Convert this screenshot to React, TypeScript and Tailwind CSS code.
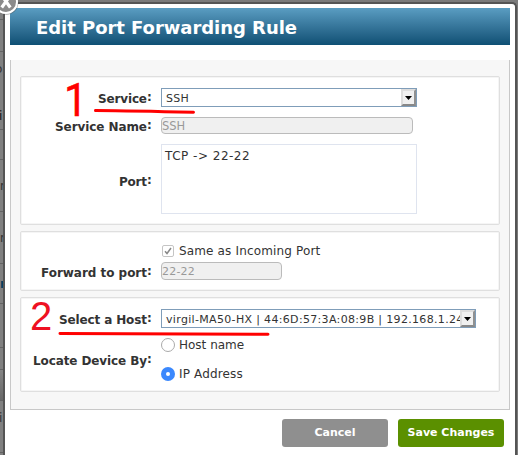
import type { ReactNode } from 'react';

function Label({ children, width, className = '' }: { children: string; width: string; className?: string }) {
  return (
    <div className={`flex w-[131px] shrink-0 justify-end font-bold whitespace-nowrap ${className}`}>
      <svg className={`h-4 ${width}`} overflow="visible" role="img">
        <text x="0" y="13" textLength="100%" lengthAdjust="spacing" fill="#333" fontSize="12">{children}</text>
      </svg>
      <span className="relative -top-px w-[5px] text-[12px] leading-4">:</span>
    </div>
  );
}

function Group({ children, className }: { children: ReactNode; className: string }) {
  return (
    <section className={`rounded-[2px] border border-[#dfdfdf] bg-white shadow-[inset_0_0_0_1px_#f5f5f5] ${className}`}>
      {children}
    </section>
  );
}

function Select({ children, className }: { children: string; className: string }) {
  return (
    <div className={`flex h-[19px] overflow-hidden border border-[#7f9db9] bg-white ${className}`}>
      <div className="min-w-0 flex-1 overflow-hidden pl-1 text-[11px] leading-[19px] tracking-[0.33px] whitespace-nowrap">{children}</div>
      <div className="flex w-[15px] shrink-0 items-center justify-center border-2 border-t-[#ddd] border-r-[#919191] border-b-[#888] border-l-[#ddd] bg-[#f0f0f0]">
        <svg width="7" height="4" viewBox="0 0 7 4"><path d="M0 0h7L3.5 4z" fill="#000" /></svg>
      </div>
    </div>
  );
}

// Rows of the page that stays visible to the left of the dialog
const rows = [
  { t: '', h: 'h-[20px] border-b', c: '' },
  { t: '', h: 'h-[32px] border-b', c: '' },
  { t: 'o', h: 'h-[33px]', c: '-ml-[5px] text-[#333]' },
  { t: 'i', h: 'h-[45px] pt-[17px] border-b', c: '-ml-px text-[#111]' },
  { t: '', h: 'h-[30px] border-b', c: '' },
  { t: 'r', h: 'h-[52px] border-b', c: 'text-[#333]' },
  { t: 'r', h: 'h-[52px] border-b', c: 'text-[#333]' },
  { t: 'r', h: 'h-[40px] border-b', c: 'font-bold text-[#06415f]' },
  { t: '', h: 'h-[44px] border-b', c: '' },
  { t: '', h: 'h-[22px] border-b', c: '' },
  { t: '', h: 'h-[31px] border-b bg-linear-to-b from-[#858585] to-[#686868]', c: '' },
  { t: 'i', h: 'h-[52px] pb-[18px] border-b', c: '-ml-px text-[#333]' },
];

export default function App() {
  return (
    <div className="relative flex h-[455px] w-[518px] overflow-hidden bg-[#7b7b7b] font-['DejaVu_Sans',Verdana,sans-serif] text-[12px] text-[#333]">
      <div className="w-[3px] shrink-0 overflow-hidden bg-[#808080]">
        {rows.map((m, i) => (
          <div key={i} className={`flex items-center border-[#646464] ${m.h}`}>
            <span className={`text-[12px] ${m.c}`}>{m.t}</span>
          </div>
        ))}
      </div>
      <div className="mt-[2px] w-[514px] shrink-0 rounded-tr-[5px] border-t-2 border-r-2 border-l-2 border-[#555] bg-white px-[5px] pt-1">
        <header className="flex h-[37px] items-center bg-linear-to-b from-[#5a9dc2] to-[#0e5074] text-white">
          <svg className="ml-[26px] h-[24px] w-[261px]" overflow="visible">
            <text x="0" y="19" textLength="261" fill="white" fontSize="18" fontWeight="bold">Edit Port Forwarding Rule</text>
          </svg>
        </header>
        <main className="mt-[15px] flex h-[350px] flex-col gap-[6px] border-x border-b border-[#c8c8c8] bg-[#f7f7f7] px-[9px] pt-4">
          <Group className="h-[149px] pt-[11px]">
            <div className="flex items-center">
              <Label width="w-[49px]">Service</Label>
              <Select className="ml-[9px] w-[256px]">SSH</Select>
            </div>
            <div className="mt-[10px] flex h-[17px] items-center">
              <Label width="w-[92px]">Service Name</Label>
              <div className="ml-[9px] h-[17px] w-[252px] rounded-[4px] border border-[#bbb] bg-[#f0f0f0] text-[11.5px] leading-[17px] text-[#999]">SSH</div>
            </div>
            <div className="mt-[10px] flex h-[70px] items-center">
              <Label width="w-[28px]" className="pt-[4px]">Port</Label>
              <div className="ml-[9px] h-[70px] w-[256px] border border-[#dfe4ef] pt-[3px] pl-[3px] leading-4 tracking-[0.5px]">TCP -&gt; 22-22</div>
            </div>
          </Group>
          <Group className="h-[60px] pt-[12px]">
            <div className="ml-[141px] flex h-[14px] items-center gap-[5px]">
              <span className="flex size-3 items-center justify-center rounded-[2px] border border-[#c5c5c5]">
                <svg width="8" height="8" viewBox="0 0 8 8"><path d="M1 4.3 3 6.5 7 1" fill="none" stroke="#888" strokeWidth="1.5" /></svg>
              </span>
              <span className="tracking-[0.15px]">Same as Incoming Port</span>
            </div>
            <div className="mt-1 flex h-[18px] items-center">
              <Label width="w-[106px]" className="pt-px">Forward to port</Label>
              <div className="ml-[9px] h-[18px] w-[121px] rounded-[4px] border border-[#bbb] bg-[#f0f0f0] text-[11px] leading-[18px] tracking-[0.2px] text-[#999]">22-22</div>
            </div>
          </Group>
          <Group className="h-[95px] pt-[11px]">
            <div className="flex items-center">
              <Label width="w-[88px]">Select a Host</Label>
              <Select className="ml-[9px] w-[315px]">virgil-MA50-HX | 44:6D:57:3A:08:9B | 192.168.1.24</Select>
            </div>
            <div className="mt-[10px] flex h-[43px]">
              <Label width="w-[114px]" className="pt-[14px]">Locate Device By</Label>
              <div className="ml-[9px] flex flex-col justify-between">
                <div className="flex h-[14px] items-center gap-[4px]">
                  <span className="size-[14px] rounded-full border border-[#aaa]" />
                  <span>Host name</span>
                </div>
                <div className="flex h-[14px] items-center gap-[4px]">
                  <span className="flex size-[14px] items-center justify-center rounded-full bg-[#3b88fd]"><span className="size-1 rounded-full bg-white" /></span>
                  <span className="tracking-[0.15px]">IP Address</span>
                </div>
              </div>
            </div>
          </Group>
        </main>
        <footer className="mt-[9px] mr-[6px] flex justify-end gap-[10px] text-[11px] font-bold text-white">
          <div className="flex h-[28px] w-[106px] items-center justify-center rounded-[3px] bg-[#8f8f8f]">Cancel</div>
          <div className="flex h-[28px] w-[106px] items-center justify-center rounded-[3px] bg-[#5b9000]">Save Changes</div>
        </footer>
      </div>
      <svg className="absolute top-0 left-0" width="20" height="17" viewBox="0 0 20 17">
        <circle cx="6.5" cy="3" r="11.8" fill="#555" opacity=".5" />
        <circle cx="6" cy="2" r="11" fill="#8b8b8b" stroke="#fff" strokeWidth="2" />
        <path d="m2-4 8.3 11.5M10-4 1.7 7.5" stroke="#fff" strokeWidth="3.2" />
      </svg>
      <span className="absolute top-[77px] left-[64px] origin-left scale-x-90 font-['Roboto',sans-serif] text-[46px] leading-[46px] text-[#ff0000] [-webkit-text-stroke:0.5px_#f00]">1</span>
      <span className="absolute top-[296px] left-[30px] font-['Liberation_Sans',sans-serif] text-[40px] leading-[40px] text-[#ee1122]">2</span>
      <svg className="pointer-events-none absolute inset-0" width="518" height="455">
        <path d="M95.5 110.5c35 .3 65 1 98 1.8" fill="none" stroke="#f00" strokeWidth="3" strokeLinecap="round" />
        <path d="M60 333.5 268 334.3" stroke="#f00" strokeWidth="3" strokeLinecap="round" />
      </svg>
    </div>
  );
}
